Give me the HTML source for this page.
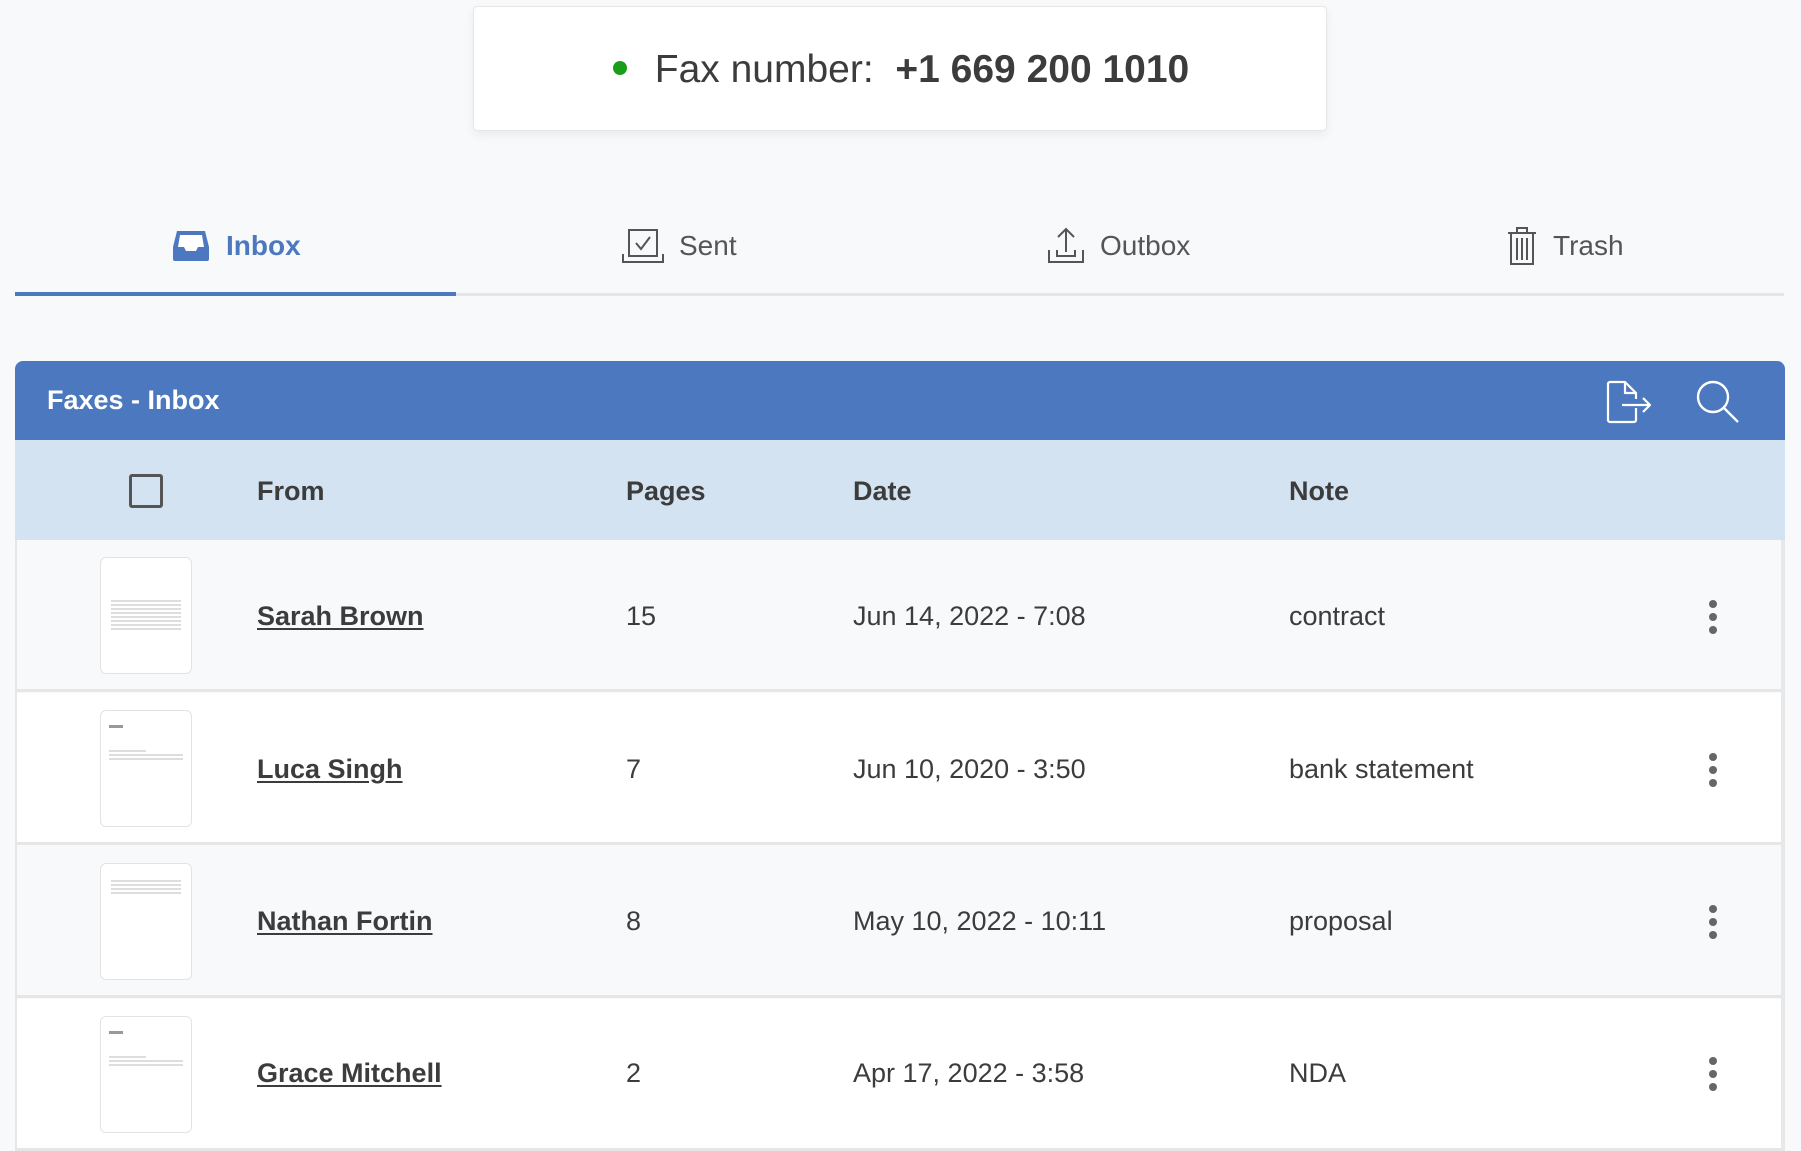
<!DOCTYPE html>
<html><head><meta charset="utf-8"><style>
*{margin:0;padding:0;box-sizing:border-box}
body{width:1801px;height:1151px;background:#f8f9fb;font-family:"Liberation Sans",sans-serif;color:#3c3c3c;position:relative;overflow:hidden}
.abs{position:absolute}
.card{left:473px;top:6px;width:854px;height:125px;background:#fff;border:1px solid #e6e6e6;border-radius:4px;box-shadow:0 4px 10px rgba(0,0,0,.06)}
.fax{left:0;width:854px;top:41px;text-align:center;font-size:39px;color:#3c3c3c}
.dot{display:inline-block;width:14px;height:14px;border-radius:50%;background:#1a9e1a;vertical-align:middle;margin-right:28px;position:relative;top:-4px}
.tab{top:230px;font-size:28px;color:#555}
.hdr{left:15px;top:361px;width:1770px;height:79px;background:#4c78bf;border-radius:8px 8px 0 0}
.cols{left:15px;top:440px;width:1770px;height:100px;background:#d4e3f1}
.ch{top:476px;font-size:27px;font-weight:bold;color:#3c3c3c}
.row{left:17px;width:1764px;height:152px;border-bottom:3px solid #e6e6e6}
.thumb{left:100px;width:92px;height:117px;background:#fff;border:1px solid #e3e3e3;border-radius:6px}
.name{left:257px;font-size:27px;font-weight:bold;text-decoration:underline;color:#3c3c3c;text-underline-offset:3px}
.cell{font-size:27px;color:#3c3c3c}
.keb{left:1709px;width:8px}
.keb i{display:block;width:8px;height:8px;border-radius:50%;background:#666;margin-bottom:5px}
.ln{height:2px;background:#ddd;margin:2px 0}
</style></head><body>
<div class="abs card"><div class="abs fax"><span class="dot"></span>Fax number:&nbsp; <b>+1 669 200 1010</b></div></div>

<svg class="abs" style="left:172px;top:228px" width="38" height="34" viewBox="0 0 38 34"><path d="M5 3h28l4 16v12a2 2 0 0 1-2 2H3a2 2 0 0 1-2-2V19z" fill="#4c78bf"/><path d="M8 7h22l2 12h-6l-2 4H14l-2-4H6z" fill="#fff"/></svg>
<div class="abs tab" style="left:226px;color:#4c78bf;font-weight:bold">Inbox</div>
<svg class="abs" style="left:622px;top:228px" width="42" height="36" viewBox="0 0 42 36" fill="none" stroke="#555" stroke-width="2"><rect x="7" y="2" width="28" height="26"/><path d="M14 15l5 6 9-12"/><path d="M1 26v8h40v-8"/></svg>
<div class="abs tab" style="left:679px">Sent</div>
<svg class="abs" style="left:1047px;top:226px" width="38" height="38" viewBox="0 0 38 38" fill="none" stroke="#555" stroke-width="2"><path d="M19 26V3M11 11l8-8 8 8"/><path d="M2 24v12h34V24M10 24v6h18v-6"/></svg>
<div class="abs tab" style="left:1100px">Outbox</div>
<svg class="abs" style="left:1506px;top:226px" width="32" height="40" viewBox="0 0 32 40" fill="none" stroke="#555" stroke-width="2"><path d="M2 7h28M11 7V2h10v5M5 7v31h22V7M11 12v22M16 12v22M21 12v22"/></svg>
<div class="abs tab" style="left:1553px">Trash</div>
<div class="abs" style="left:15px;top:293px;width:1769px;height:3px;background:#e5e6e8"></div>
<div class="abs" style="left:15px;top:292px;width:441px;height:4px;background:#4c78bf"></div>

<div class="abs hdr"><div class="abs" style="left:32px;top:24px;font-size:27px;font-weight:bold;color:#fff">Faxes - Inbox</div>
<svg class="abs" style="left:1591px;top:19px" width="48" height="44" viewBox="0 0 48 44" fill="none" stroke="#fff" stroke-width="2.2" stroke-linejoin="round"><path d="M30 28v12a2 2 0 0 1-2 2H4a2 2 0 0 1-2-2V4a2 2 0 0 1 2-2h15l11 11v6M19 2v11h11"/><path d="M16 25h28M37 18l7 7-7 7"/></svg>
<svg class="abs" style="left:1681px;top:19px" width="44" height="44" viewBox="0 0 44 44" fill="none" stroke="#fff" stroke-width="2.4"><circle cx="17" cy="17" r="15"/><path d="M28 28l14 14"/></svg>
</div>
<div class="abs cols"></div>
<div class="abs" style="left:129px;top:474px;width:34px;height:34px;border:3px solid #555;border-radius:3px"></div>
<div class="abs ch" style="left:257px">From</div>
<div class="abs ch" style="left:626px">Pages</div>
<div class="abs ch" style="left:853px">Date</div>
<div class="abs ch" style="left:1289px">Note</div>

<div class="abs" style="left:15px;top:540px;width:2px;height:611px;background:#e6e6e6"></div>
<div class="abs" style="left:1781px;top:540px;width:4px;height:611px;background:#e8e8e8"></div>

<div class="abs row" style="top:540px;background:#f8f9fb"></div>
<div class="abs row" style="top:693px;background:#fff"></div>
<div class="abs row" style="top:846px;background:#f8f9fb"></div>
<div class="abs row" style="top:999px;background:#fff"></div>

<div class="abs thumb" style="top:557px;padding:40px 10px"><div class="ln"></div><div class="ln"></div><div class="ln"></div><div class="ln"></div><div class="ln"></div><div class="ln"></div><div class="ln"></div><div class="ln"></div></div>
<div class="abs thumb" style="top:710px;padding:12px 8px"><div class="ln" style="width:14px;height:3px;background:#999"></div><br><div class="ln" style="width:50%"></div><div class="ln"></div><div class="ln"></div></div>
<div class="abs thumb" style="top:863px;padding:14px 10px"><div class="ln"></div><div class="ln"></div><div class="ln"></div><div class="ln"></div></div>
<div class="abs thumb" style="top:1016px;padding:12px 8px"><div class="ln" style="width:14px;height:3px;background:#999"></div><br><div class="ln" style="width:50%"></div><div class="ln"></div><div class="ln"></div></div>

<div class="abs name" style="top:601px">Sarah Brown</div>
<div class="abs name" style="top:754px">Luca Singh</div>
<div class="abs name" style="top:906px">Nathan Fortin</div>
<div class="abs name" style="top:1058px">Grace Mitchell</div>

<div class="abs cell" style="left:626px;top:601px">15</div>
<div class="abs cell" style="left:626px;top:754px">7</div>
<div class="abs cell" style="left:626px;top:906px">8</div>
<div class="abs cell" style="left:626px;top:1058px">2</div>

<div class="abs cell" style="left:853px;top:601px">Jun 14, 2022 - 7:08</div>
<div class="abs cell" style="left:853px;top:754px">Jun 10, 2020 - 3:50</div>
<div class="abs cell" style="left:853px;top:906px">May 10, 2022 - 10:11</div>
<div class="abs cell" style="left:853px;top:1058px">Apr 17, 2022 - 3:58</div>

<div class="abs cell" style="left:1289px;top:601px">contract</div>
<div class="abs cell" style="left:1289px;top:754px">bank statement</div>
<div class="abs cell" style="left:1289px;top:906px">proposal</div>
<div class="abs cell" style="left:1289px;top:1058px">NDA</div>

<div class="abs keb" style="top:600px"><i></i><i></i><i></i></div>
<div class="abs keb" style="top:753px"><i></i><i></i><i></i></div>
<div class="abs keb" style="top:905px"><i></i><i></i><i></i></div>
<div class="abs keb" style="top:1057px"><i></i><i></i><i></i></div>
</body></html>
